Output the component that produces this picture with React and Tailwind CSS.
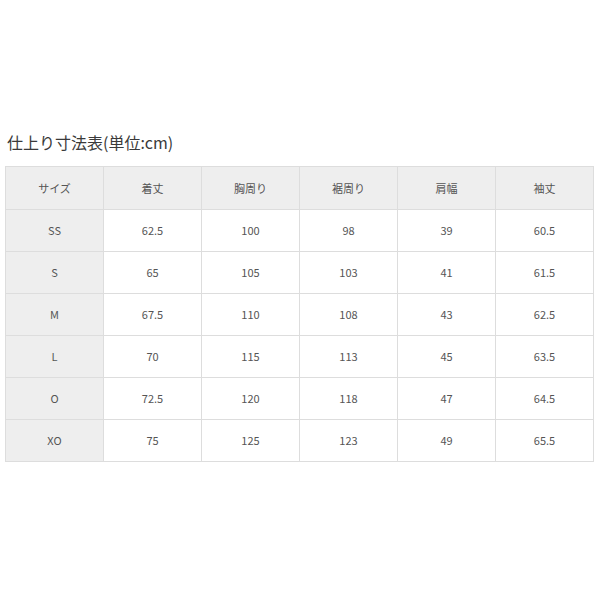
import React from 'react';

const headers = ['サイズ', '着丈', '胸周り', '裾周り', '肩幅', '袖丈'];

const rows = [
  ['SS', '62.5', '100', '98', '39', '60.5'],
  ['S', '65', '105', '103', '41', '61.5'],
  ['M', '67.5', '110', '108', '43', '62.5'],
  ['L', '70', '115', '113', '45', '63.5'],
  ['O', '72.5', '120', '118', '47', '64.5'],
  ['XO', '75', '125', '123', '49', '65.5'],
];

const App = () => {
  return (
    <div
      className="w-[600px] h-[600px] bg-white text-[#444]"
      style={{ fontFamily: '"Noto Sans CJK JP", "Open Sans", sans-serif' }}
    >
      <div className="pt-[130px] px-[5px]">
        <h2 className="text-[16px] leading-[24px] text-[#3a3a3a] pl-[2px] mb-[12px]">仕上り寸法表(単位:cm)</h2>
        <table className="w-[589px] border-collapse table-fixed text-[11px] text-[#555]">
          <thead>
            <tr className="bg-[#eeeeee]">
              {headers.map((h) => (
                <th key={h} className="h-[43px] border border-[#dddddd] font-normal text-center">
                  {h}
                </th>
              ))}
            </tr>
          </thead>
          <tbody>
            {rows.map((row) => (
              <tr key={row[0]}>
                {row.map((cell, i) => (
                  <td
                    key={i}
                    className={`h-[42px] border border-[#dddddd] text-center ${i === 0 ? 'bg-[#eeeeee]' : 'bg-white'}`}
                  >
                    {cell}
                  </td>
                ))}
              </tr>
            ))}
          </tbody>
        </table>
      </div>
    </div>
  );
};

export default App;
